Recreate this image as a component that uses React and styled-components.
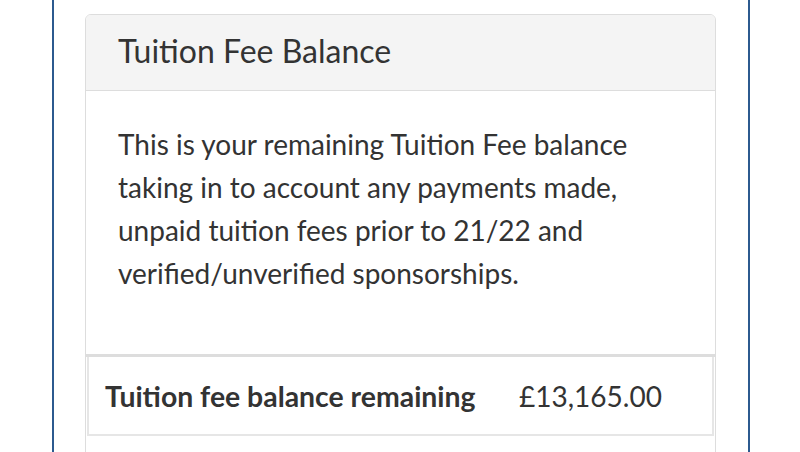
import styled, { createGlobalStyle } from "styled-components";

const GlobalStyle = createGlobalStyle`
    html, body {
        margin: 0;
        padding: 0;
        background: #ffffff;
        font-family: Lato, "Open Sans", "Liberation Sans", sans-serif;
        color: #333333;
    }
`;

const Page = styled.div`
    height: 452px;
    overflow: hidden;
`;

const Frame = styled.div`
    box-sizing: border-box;
    width: 698px;
    height: 100%;
    margin-left: 52px;
    border-left: 2px solid #2c5a8f;
    border-right: 2px solid #2c5a8f;
    padding: 14px 32px 0 31px;
`;

const Panel = styled.section`
    border: 1px solid #dddddd;
    border-radius: 6px;
    background: #ffffff;
    overflow: hidden;
`;

const PanelHeading = styled.header`
    box-sizing: border-box;
    height: 76px;
    padding: 17px 32px 0;
    background: #f4f4f4;
    border-bottom: 1px solid #dddddd;
`;

const PanelTitle = styled.h3`
    margin: 0;
    font-size: 32px;
    line-height: 1.2;
    font-weight: 400;
    color: #333333;
`;

const PanelBody = styled.div`
    padding: 32px 32px 59px;
`;

const Intro = styled.p`
    margin: 0;
    font-size: 28px;
    line-height: 43px;
    color: #333333;
`;

const Table = styled.div`
    border-top: 3px solid #dddddd;
`;

const Row = styled.div`
    display: flex;
    align-items: center;
    height: 77px;
    margin: 0 1px;
    padding: 0 16px;
    border: 2px solid #e6e6e6;
    border-top: none;
`;

const Label = styled.div`
    width: 414px;
    font-size: 28.4px;
    font-weight: 700;
    color: #333333;
`;

const Value = styled.div`
    font-size: 28px;
    color: #333333;
`;

const EmptyRow = styled.div`
    height: 60px;
`;

const App = () => {
    return (
        <Page>
            <GlobalStyle />
            <Frame>
                <Panel>
                    <PanelHeading>
                        <PanelTitle>Tuition Fee Balance</PanelTitle>
                    </PanelHeading>
                    <PanelBody>
                        <Intro>
                            This is your remaining Tuition Fee balance taking in to account
                            any payments made, unpaid tuition fees prior to 21/22 and
                            verified/unverified sponsorships.
                        </Intro>
                    </PanelBody>
                    <Table>
                        <Row>
                            <Label>Tuition fee balance remaining</Label>
                            <Value>£13,165.00</Value>
                        </Row>
                        <EmptyRow />
                    </Table>
                </Panel>
            </Frame>
        </Page>
    );
};

export default App;
